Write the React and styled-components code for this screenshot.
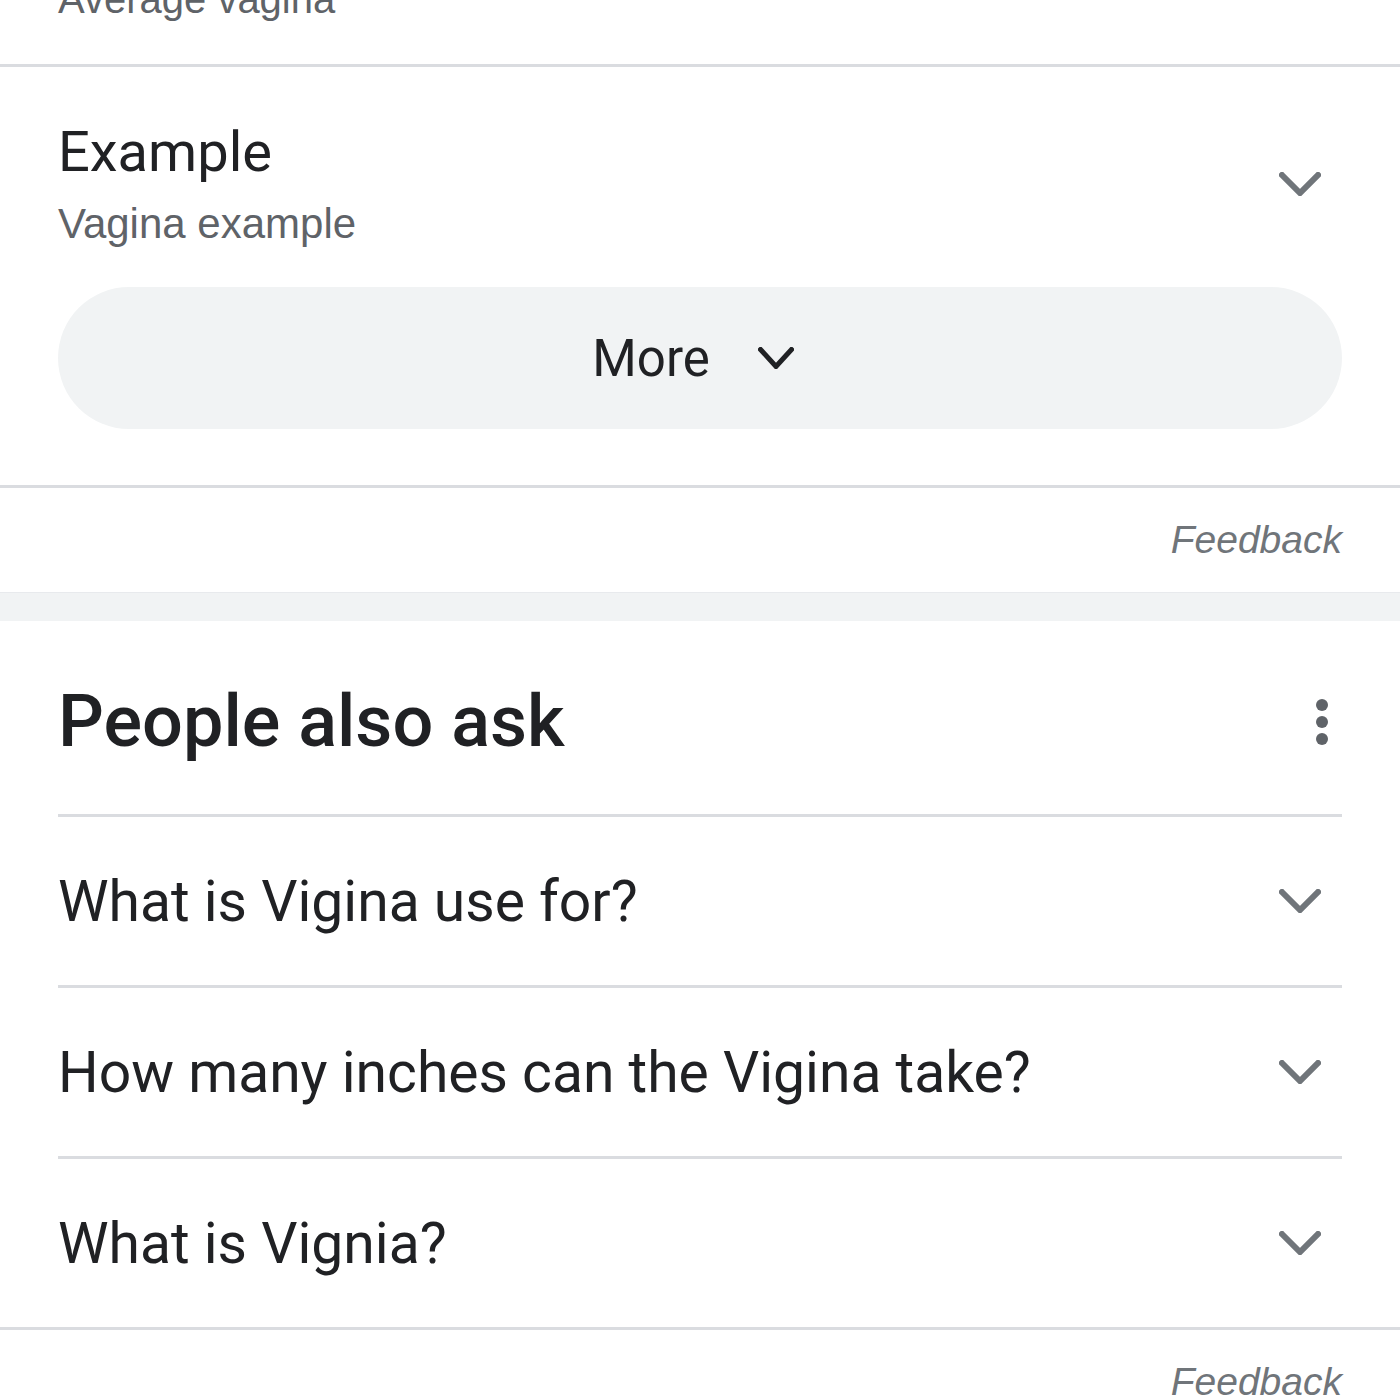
import React from 'react';
import styled, { createGlobalStyle } from 'styled-components';

const Global = createGlobalStyle`
  html, body {
    margin: 0;
    padding: 0;
    background: #ffffff;
    overflow: hidden;
  }
  body {
    font-family: Roboto, "Liberation Sans", Arial, sans-serif;
    color: #202124;
  }
`;

const Page = styled.div`
  width: 1400px;
  display: flex;
  flex-direction: column;
`;

const TopCut = styled.div`
  height: 64px;
  overflow: hidden;
  padding: 0 58px;
`;

const CutText = styled.div`
  margin-top: -25px;
  font-family: "Liberation Sans", Arial, sans-serif;
  font-size: 40px;
  line-height: 48px;
  color: #5f6368;
`;

const Divider = styled.div`
  height: 3px;
  background: #dadce0;
  margin: ${p => (p.$inset ? '0 58px' : '0')};
`;

const Card = styled.div`
  padding: 52px 58px 56px;
  display: flex;
  flex-direction: column;
  gap: 38px;
`;

const ExampleRow = styled.div`
  display: flex;
  align-items: center;
  justify-content: space-between;
`;

const ExampleText = styled.div`
  display: flex;
  flex-direction: column;
  gap: 14px;
`;

const Title = styled.div`
  font-family: Roboto, sans-serif;
  font-size: 56px;
  line-height: 66px;
  color: #202124;
`;

const Sub = styled.div`
  font-family: "Liberation Sans", Arial, sans-serif;
  font-size: 42px;
  line-height: 50px;
  color: #5f6368;
`;

const MoreButton = styled.div`
  height: 142px;
  border-radius: 71px;
  background: #f1f3f4;
  display: flex;
  align-items: center;
  justify-content: center;
  gap: 48px;
  padding-right: 14px;
  font-family: Roboto, sans-serif;
  font-size: 51px;
  color: #202124;
`;

const FeedbackRow = styled.div`
  height: 104px;
  padding: 0 58px;
  display: flex;
  align-items: center;
  justify-content: flex-end;
`;

const Feedback = styled.span`
  font-family: "Liberation Sans", Arial, sans-serif;
  font-style: italic;
  font-size: 39px;
  color: #70757a;
`;

const Band = styled.div`
  height: 28px;
  background: #f1f3f4;
  border-top: 1px solid #e8eaed;
`;

const AskHeader = styled.div`
  height: 193px;
  padding: 8px 58px 0;
  box-sizing: border-box;
  display: flex;
  align-items: center;
  justify-content: space-between;
`;

const AskTitle = styled.h2`
  margin: 0;
  font-family: Roboto, sans-serif;
  font-weight: 500;
  font-size: 72px;
  color: #202124;
`;

const QuestionRow = styled.div`
  height: 168px;
  padding: 0 58px;
  display: flex;
  align-items: center;
  justify-content: space-between;
`;

const Question = styled.span`
  font-family: Roboto, sans-serif;
  font-size: 57px;
  color: #202124;
`;

const IconBox = styled.div`
  width: 84px;
  display: flex;
  justify-content: ${p => (p.$end ? 'flex-end' : 'center')};
  padding-right: ${p => (p.$end ? '13px' : '0')};
  box-sizing: border-box;
  flex-shrink: 0;
`;

const Chevron = ({ color = '#70757a', w = 42, h = 24, sw = 6 }) => (
  <svg width={w} height={h} viewBox={`0 0 ${w} ${h}`}>
    <polyline
      points={`${sw / 2},${sw / 2} ${w / 2},${h - sw / 2} ${w - sw / 2},${sw / 2}`}
      fill="none"
      stroke={color}
      strokeWidth={sw}
      strokeLinecap="square"
    />
  </svg>
);

const Dots = () => (
  <svg width="14" height="46" viewBox="0 0 14 46">
    <circle cx="7" cy="6" r="6" fill="#5f6368" />
    <circle cx="7" cy="23" r="6" fill="#5f6368" />
    <circle cx="7" cy="40" r="6" fill="#5f6368" />
  </svg>
);

const questions = [
  'What is Vigina use for?',
  'How many inches can the Vigina take?',
  'What is Vignia?',
];

export default function App() {
  return (
    <Page>
      <Global />
      <TopCut>
        <CutText>Average vagina</CutText>
      </TopCut>
      <Divider />
      <Card>
        <ExampleRow>
          <ExampleText>
            <Title>Example</Title>
            <Sub>Vagina example</Sub>
          </ExampleText>
          <IconBox>
            <Chevron />
          </IconBox>
        </ExampleRow>
        <MoreButton>
          <span>More</span>
          <Chevron color="#202124" w={36} h={22} sw={5} />
        </MoreButton>
      </Card>
      <Divider />
      <FeedbackRow>
        <Feedback>Feedback</Feedback>
      </FeedbackRow>
      <Band />
      <AskHeader>
        <AskTitle>People also ask</AskTitle>
        <IconBox $end>
          <Dots />
        </IconBox>
      </AskHeader>
      {questions.map(q => (
        <React.Fragment key={q}>
          <Divider $inset />
          <QuestionRow>
            <Question>{q}</Question>
            <IconBox>
              <Chevron />
            </IconBox>
          </QuestionRow>
        </React.Fragment>
      ))}
      <Divider />
      <FeedbackRow>
        <Feedback>Feedback</Feedback>
      </FeedbackRow>
    </Page>
  );
}
